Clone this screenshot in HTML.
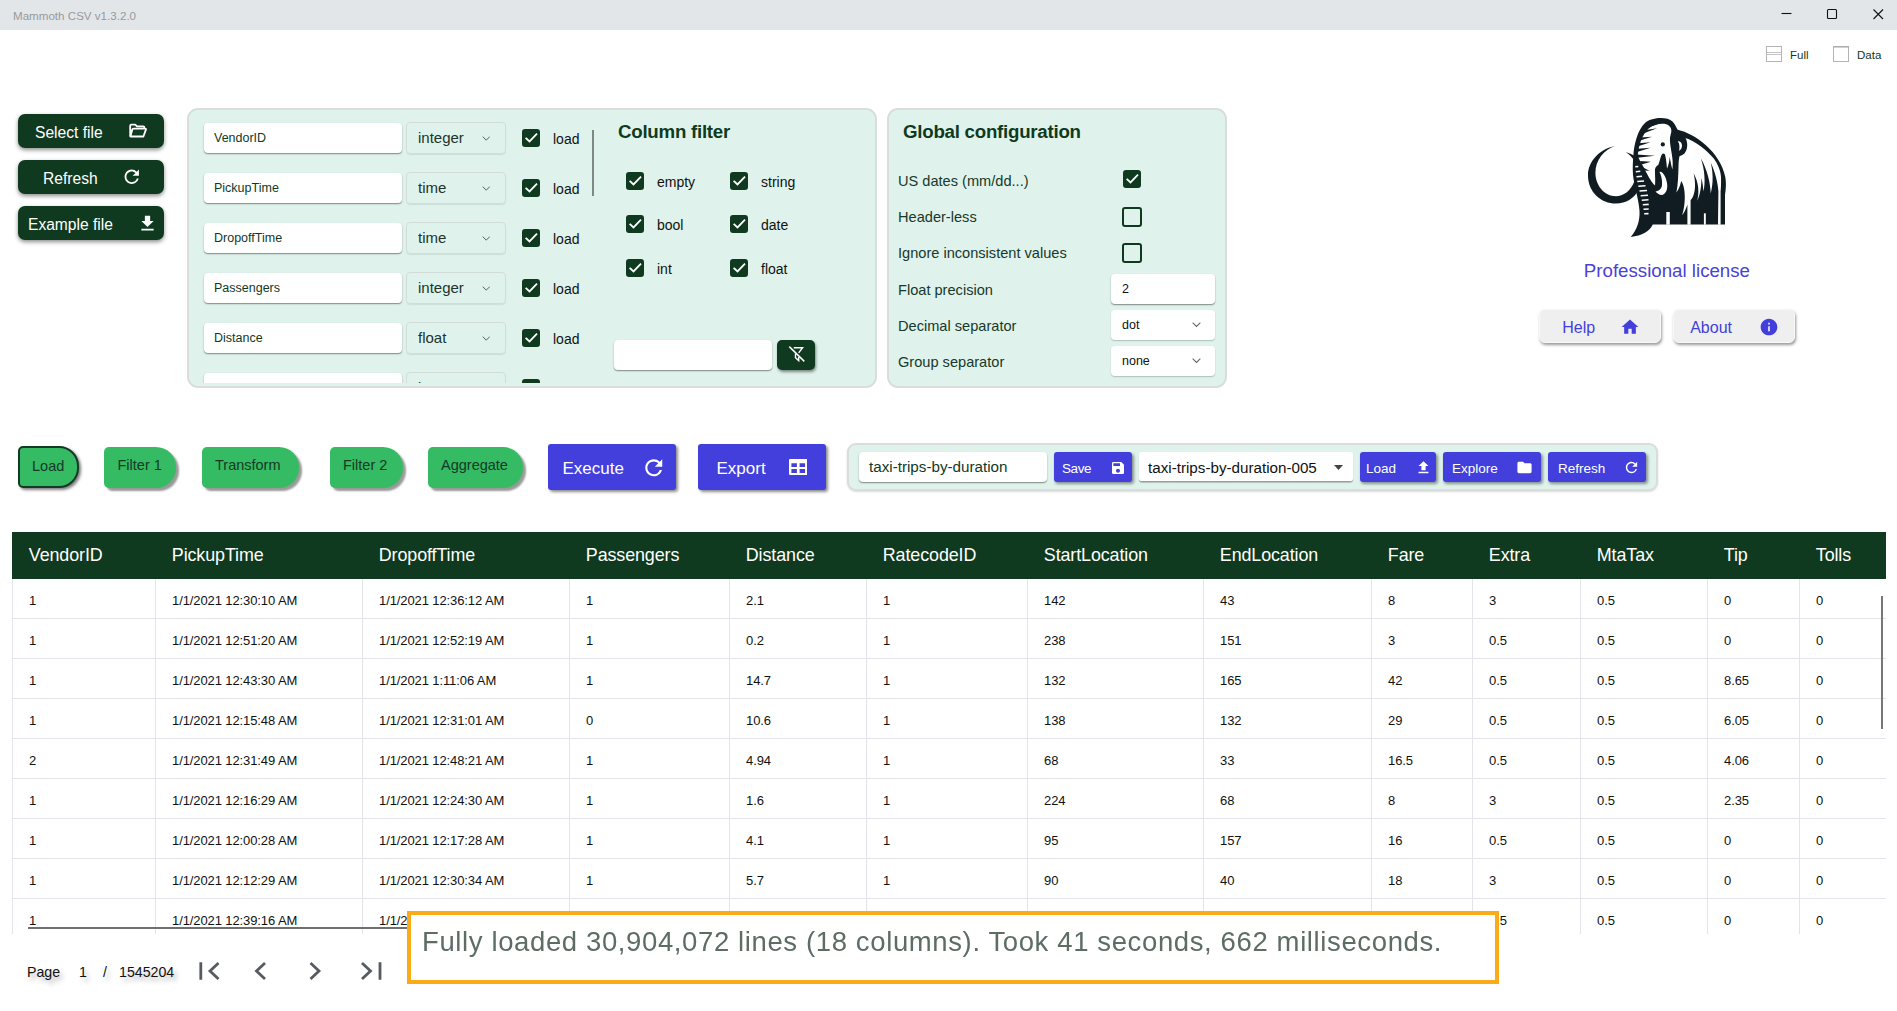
<!DOCTYPE html>
<html lang="en"><head><meta charset="utf-8"><title>Mammoth CSV v1.3.2.0</title>
<style>
*{box-sizing:border-box;margin:0;padding:0}
html,body{width:1897px;height:1011px;overflow:hidden;background:#fff}
body{font-family:"Liberation Sans",sans-serif;color:#103a1f;position:relative}
.abs{position:absolute}
.t{position:absolute;white-space:nowrap;line-height:1}
#titlebar{left:0;top:0;width:1897px;height:30px;background:#e3e6e9}
#titlebar .t{left:13px;top:10.300px;font-size:11.600px;color:#97999c}
.dbtn{position:absolute;left:18px;width:146px;height:34px;background:#0f3a20;border-radius:7px;box-shadow:0 2px 4px rgba(0,0,0,.45);color:#fff;font-size:15.600px}
.dbtn .t{top:11px}
.panel{position:absolute;background:#dff3ec;border:2px solid #d9dedc;border-radius:11px}
.inp{position:absolute;background:#fff;border-radius:4px;box-shadow:0 1px 1.5px rgba(0,0,0,.45);font-size:12.5px;color:#103a1f}
.sel{position:absolute;border:1px solid #d3dcd8;border-radius:4px;font-size:15px;color:#23332b;box-shadow:0 1px 1px rgba(0,0,0,.08)}
.cb{position:absolute;width:18px;height:18px;border-radius:3px;background:#0f3a20}
.cb svg{position:absolute;left:0;top:0}
.cbe{position:absolute;width:20px;height:20px;border-radius:3px;border:2px solid #0f3a20}
.lbl{font-size:14px;color:#111}
.h{font-size:18.700px;font-weight:bold;color:#0f3a20;letter-spacing:-0.250px}
.gl{font-size:14.600px;color:#17382a}
.step{position:absolute;top:446.500px;height:41px;background:#35bb63;border-radius:5px 20px 20px 5px;box-shadow:3px 3px 2px rgba(0,0,0,.4);font-size:14.5px;color:#143a26}
.step .t{top:11px}
.pbtn{position:absolute;background:#423fdd;color:#fff;border-radius:3px;box-shadow:2px 2px 3px rgba(0,0,0,.45)}
.sb{position:absolute;top:452px;height:30px;background:#423fdd;color:#fff;border-radius:3px;box-shadow:1.500px 2px 3px rgba(0,0,0,.4);font-size:13.5px}
.sb .t{top:10px}
.lbtn{position:absolute;top:309px;height:34px;background:#efeff0;border-radius:6px;border:1px solid #f8f8f8;box-shadow:1px 2px 3px rgba(0,0,0,.4);font-size:16px;color:#423fdd}
#thead{left:12px;top:531.500px;width:1874px;height:47.500px;background:#0f3a20}
#thead .t{top:15.700px;margin-left:.800px;font-size:17.900px;color:#fff;letter-spacing:-0.100px}
.row{position:absolute;left:0;width:1874px;height:40px;border-bottom:1px solid #e3e3ea}
.c{position:absolute;top:0;height:40px;border-left:1px solid #e3e3ea;font-size:13px;color:#111;line-height:44px;padding-left:16px;white-space:nowrap;letter-spacing:-0.100px}
.pg{font-size:14.200px;color:#111;text-shadow:3px 4px 5px rgba(0,0,0,.3)}
</style></head><body>
<div id="titlebar" class="abs"><span class="t">Mammoth CSV v1.3.2.0</span></div>
<svg class="abs" style="left:1770px;top:0" width="127" height="30" viewBox="0 0 127 30"><path d="M11.5 13.5 H21.5" stroke="#111" stroke-width="1.1" fill="none"/><rect x="57.5" y="9.5" width="9" height="9" rx="1" fill="none" stroke="#111" stroke-width="1.1"/><path d="M103.5 9.5 L113 19 M113 9.5 L103.5 19" stroke="#111" stroke-width="1.1" fill="none"/></svg>
<svg class="abs" style="left:1766px;top:46px" width="17" height="17" viewBox="0 0 17 17"><rect x="0.500" y="0.500" width="15" height="15" fill="#fff" stroke="#b4b4b4"/><path d="M0.500 6.500 H15.500 M0.500 8.500 H15.500" stroke="#c4c4c4"/></svg>
<span class="t" style="left:1790px;top:50.200px;font-size:11.500px;color:#103a1f">Full</span>
<svg class="abs" style="left:1833px;top:46px" width="17" height="17" viewBox="0 0 17 17"><rect x="0.500" y="0.500" width="15" height="15" fill="#fff" stroke="#b4b4b4"/><path d="M0.500 1 H15.500" stroke="#a5a5a5"/></svg>
<span class="t" style="left:1857px;top:50.200px;font-size:11.500px;color:#103a1f">Data</span>
<div class="dbtn" style="top:114px"><span class="t" style="left:17px">Select file</span><svg class="abs" style="left:110px;top:9px" width="20" height="16" viewBox="0 0 20 16"><path d="M2.2 13.5 V2.8 Q2.2 1.6 3.4 1.6 H7.2 L9 3.4 H15.2 Q16.4 3.4 16.4 4.6 V5.6 H5.6 Q4.6 5.6 4.3 6.6 L2.4 13.5 H15.4 L17.9 6.6 Q18.2 5.6 17.2 5.6" fill="none" stroke="#fff" stroke-width="1.800" stroke-linejoin="round"/></svg></div>
<div class="dbtn" style="top:160px"><span class="t" style="left:25px">Refresh</span><svg class="abs" style="left:102.500px;top:6px" width="21.500" height="21.500" viewBox="0 0 24 24"><path fill="#fff" d="M17.65 6.35A7.958 7.958 0 0 0 12 4c-4.42 0-7.99 3.58-7.99 8s3.57 8 7.99 8c3.73 0 6.84-2.55 7.73-6h-2.08A5.99 5.99 0 0 1 12 18c-3.31 0-6-2.69-6-6s2.690-6 6-6c1.660 0 3.140.69 4.220 1.780L13 11h7V4l-2.350 2.350z"/></svg></div>
<div class="dbtn" style="top:206px"><span class="t" style="left:10px">Example file</span><svg class="abs" style="left:119.300px;top:7px" width="21" height="21" viewBox="0 0 24 24"><path fill="#fff" d="M19 9h-4V3H9v6H5l7 7 7-7zM5 18v2h14v-2H5z"/></svg></div>
<div class="panel" style="left:187px;top:108px;width:690px;height:280px;overflow:hidden">
<div class="abs" style="left:0;top:0;width:400px;height:272.500px;overflow:hidden">
<div class="inp" style="left:15px;top:13px;width:198px;height:30px"><span class="t" style="left:10px;top:9px">VendorID</span></div>
<div class="sel" style="left:217px;top:12px;width:100px;height:32px"><span class="t" style="left:11px;top:7px">integer</span><svg class="abs" style="left:74.6px;top:12.5px" width="8.5" height="5" viewBox="0 0 10 6"><path d="M0.700 0.700 L5 5 L9.300 0.700" fill="none" stroke="#53635b" stroke-width="1.200"/></svg></div>
<div class="cb" style="left:333px;top:19px"><svg width="18" height="18" viewBox="0 0 18 18"><path d="M4.300 9.500 L7.500 12.400 L14.400 5.300" fill="none" stroke="#fff" stroke-width="1.800" stroke-linecap="square"/></svg></div>
<span class="t lbl" style="left:364px;top:22px">load</span>
<div class="inp" style="left:15px;top:63px;width:198px;height:30px"><span class="t" style="left:10px;top:9px">PickupTime</span></div>
<div class="sel" style="left:217px;top:62px;width:100px;height:32px"><span class="t" style="left:11px;top:7px">time</span><svg class="abs" style="left:74.6px;top:12.5px" width="8.5" height="5" viewBox="0 0 10 6"><path d="M0.700 0.700 L5 5 L9.300 0.700" fill="none" stroke="#53635b" stroke-width="1.200"/></svg></div>
<div class="cb" style="left:333px;top:69px"><svg width="18" height="18" viewBox="0 0 18 18"><path d="M4.300 9.500 L7.500 12.400 L14.400 5.300" fill="none" stroke="#fff" stroke-width="1.800" stroke-linecap="square"/></svg></div>
<span class="t lbl" style="left:364px;top:72px">load</span>
<div class="inp" style="left:15px;top:113px;width:198px;height:30px"><span class="t" style="left:10px;top:9px">DropoffTime</span></div>
<div class="sel" style="left:217px;top:112px;width:100px;height:32px"><span class="t" style="left:11px;top:7px">time</span><svg class="abs" style="left:74.6px;top:12.5px" width="8.5" height="5" viewBox="0 0 10 6"><path d="M0.700 0.700 L5 5 L9.300 0.700" fill="none" stroke="#53635b" stroke-width="1.200"/></svg></div>
<div class="cb" style="left:333px;top:119px"><svg width="18" height="18" viewBox="0 0 18 18"><path d="M4.300 9.500 L7.500 12.400 L14.400 5.300" fill="none" stroke="#fff" stroke-width="1.800" stroke-linecap="square"/></svg></div>
<span class="t lbl" style="left:364px;top:122px">load</span>
<div class="inp" style="left:15px;top:163px;width:198px;height:30px"><span class="t" style="left:10px;top:9px">Passengers</span></div>
<div class="sel" style="left:217px;top:162px;width:100px;height:32px"><span class="t" style="left:11px;top:7px">integer</span><svg class="abs" style="left:74.6px;top:12.5px" width="8.5" height="5" viewBox="0 0 10 6"><path d="M0.700 0.700 L5 5 L9.300 0.700" fill="none" stroke="#53635b" stroke-width="1.200"/></svg></div>
<div class="cb" style="left:333px;top:169px"><svg width="18" height="18" viewBox="0 0 18 18"><path d="M4.300 9.500 L7.500 12.400 L14.400 5.300" fill="none" stroke="#fff" stroke-width="1.800" stroke-linecap="square"/></svg></div>
<span class="t lbl" style="left:364px;top:172px">load</span>
<div class="inp" style="left:15px;top:213px;width:198px;height:30px"><span class="t" style="left:10px;top:9px">Distance</span></div>
<div class="sel" style="left:217px;top:212px;width:100px;height:32px"><span class="t" style="left:11px;top:7px">float</span><svg class="abs" style="left:74.6px;top:12.5px" width="8.5" height="5" viewBox="0 0 10 6"><path d="M0.700 0.700 L5 5 L9.300 0.700" fill="none" stroke="#53635b" stroke-width="1.200"/></svg></div>
<div class="cb" style="left:333px;top:219px"><svg width="18" height="18" viewBox="0 0 18 18"><path d="M4.300 9.500 L7.500 12.400 L14.400 5.300" fill="none" stroke="#fff" stroke-width="1.800" stroke-linecap="square"/></svg></div>
<span class="t lbl" style="left:364px;top:222px">load</span>
<div class="inp" style="left:15px;top:263px;width:198px;height:30px"><span class="t" style="left:10px;top:9px"></span></div>
<div class="sel" style="left:217px;top:262px;width:100px;height:32px"><span class="t" style="left:11px;top:7px">i</span><svg class="abs" style="left:74.6px;top:12.5px" width="8.5" height="5" viewBox="0 0 10 6"><path d="M0.700 0.700 L5 5 L9.300 0.700" fill="none" stroke="#53635b" stroke-width="1.200"/></svg></div>
<div class="cb" style="left:333px;top:269px"><svg width="18" height="18" viewBox="0 0 18 18"><path d="M4.300 9.500 L7.500 12.400 L14.400 5.300" fill="none" stroke="#fff" stroke-width="1.800" stroke-linecap="square"/></svg></div>
</div>
<div class="abs" style="left:403px;top:20px;width:2px;height:66px;background:#7d8985"></div>
<span class="t h" style="left:429px;top:13.299999999999997px">Column filter</span>
<div class="cb" style="left:437px;top:62px"><svg width="18" height="18" viewBox="0 0 18 18"><path d="M4.300 9.500 L7.500 12.400 L14.400 5.300" fill="none" stroke="#fff" stroke-width="1.800" stroke-linecap="square"/></svg></div>
<span class="t lbl" style="left:468px;top:65px">empty</span>
<div class="cb" style="left:541px;top:62px"><svg width="18" height="18" viewBox="0 0 18 18"><path d="M4.300 9.500 L7.500 12.400 L14.400 5.300" fill="none" stroke="#fff" stroke-width="1.800" stroke-linecap="square"/></svg></div>
<span class="t lbl" style="left:572px;top:65px">string</span>
<div class="cb" style="left:437px;top:105px"><svg width="18" height="18" viewBox="0 0 18 18"><path d="M4.300 9.500 L7.500 12.400 L14.400 5.300" fill="none" stroke="#fff" stroke-width="1.800" stroke-linecap="square"/></svg></div>
<span class="t lbl" style="left:468px;top:108px">bool</span>
<div class="cb" style="left:541px;top:105px"><svg width="18" height="18" viewBox="0 0 18 18"><path d="M4.300 9.500 L7.500 12.400 L14.400 5.300" fill="none" stroke="#fff" stroke-width="1.800" stroke-linecap="square"/></svg></div>
<span class="t lbl" style="left:572px;top:108px">date</span>
<div class="cb" style="left:437px;top:149px"><svg width="18" height="18" viewBox="0 0 18 18"><path d="M4.300 9.500 L7.500 12.400 L14.400 5.300" fill="none" stroke="#fff" stroke-width="1.800" stroke-linecap="square"/></svg></div>
<span class="t lbl" style="left:468px;top:152px">int</span>
<div class="cb" style="left:541px;top:149px"><svg width="18" height="18" viewBox="0 0 18 18"><path d="M4.300 9.500 L7.500 12.400 L14.400 5.300" fill="none" stroke="#fff" stroke-width="1.800" stroke-linecap="square"/></svg></div>
<span class="t lbl" style="left:572px;top:152px">float</span>
<div class="inp" style="left:425px;top:230px;width:158px;height:30px"></div>
<div class="abs" style="left:588px;top:230px;width:38px;height:30px;background:#0f3a20;border-radius:5px;box-shadow:1px 2px 3px rgba(0,0,0,.45)"><svg class="abs" style="left:0;top:0" width="38" height="30" viewBox="0 0 38 30"><g fill="none" stroke="#fff" stroke-width="1.400"><path d="M16.800 7.700 H25.600 L21.700 12.900"/><path d="M18.500 13.600 V17.800 L21.700 20.600 V17"/><path d="M12.300 6.600 L27.300 21.400" stroke-width="1.500"/></g></svg></div>
</div>
<div class="panel" style="left:887px;top:108px;width:340px;height:280px">
<span class="t h" style="left:14px;top:13.299999999999997px">Global configuration</span>
<span class="t gl" style="left:9px;top:63.5px">US dates (mm/dd...)</span>
<span class="t gl" style="left:9px;top:99.5px">Header-less</span>
<span class="t gl" style="left:9px;top:135.5px">Ignore inconsistent values</span>
<span class="t gl" style="left:9px;top:172.5px">Float precision</span>
<span class="t gl" style="left:9px;top:208.5px">Decimal separator</span>
<span class="t gl" style="left:9px;top:244.5px">Group separator</span>
<div class="cb" style="left:234px;top:60px"><svg width="18" height="18" viewBox="0 0 18 18"><path d="M4.300 9.500 L7.500 12.400 L14.400 5.300" fill="none" stroke="#fff" stroke-width="1.800" stroke-linecap="square"/></svg></div>
<div class="cbe" style="left:233px;top:96.5px"></div>
<div class="cbe" style="left:233px;top:132.5px"></div>
<div class="inp" style="left:222px;top:164px;width:104px;height:30px"><span class="t" style="left:11px;top:9px;color:#111">2</span></div>
<div class="inp" style="left:222px;top:200px;width:104px;height:30px;box-shadow:0 1px 1.500px rgba(0,0,0,.22)"><span class="t" style="left:11px;top:9px;color:#111">dot</span><svg class="abs" style="left:81px;top:12.3px" width="9" height="5.4" viewBox="0 0 10 6"><path d="M0.700 0.700 L5 5 L9.300 0.700" fill="none" stroke="#666" stroke-width="1.200"/></svg></div>
<div class="inp" style="left:222px;top:236px;width:104px;height:30px;box-shadow:0 1px 1.500px rgba(0,0,0,.22)"><span class="t" style="left:11px;top:9px;color:#111">none</span><svg class="abs" style="left:81px;top:12.3px" width="9" height="5.4" viewBox="0 0 10 6"><path d="M0.700 0.700 L5 5 L9.300 0.700" fill="none" stroke="#666" stroke-width="1.200"/></svg></div>
</div>
<svg class="abs" style="left:1570px;top:105px" width="180" height="145" viewBox="0 0 180 145">
<g fill="#101c21">
<path d="M63.300 52 C63.800 40 67.500 24.500 75.500 17.500 C82 12.300 97 11.300 102.500 16.500 C105 19 106 22 107.700 24.700 C125 28.500 150.500 47 155.300 72 C156.600 80 155.500 86 155 90 L155 119.500 L82.800 119.500 C80 126 72 131 60.700 131.900 C67 125 70 116 69.500 106 C69 95 64 80 63 70 C62.500 62 62.900 56 63.300 52Z"/>
<path d="M45 41 C30 44 18 56 18 70.400 C18 87 31 98.500 46 98.500 C56 98.500 64 93 68 86 L64.500 76 C61 86 53 91.300 46 91.300 C34 91.300 25.400 80 25.400 67.800 C25.400 55 34 45 45 41Z"/>
<path d="M55.800 47.300 C61 48.500 66 51 70 56 L65 57 C62.500 52.500 59.500 49.500 55.800 47.300Z"/>
</g>
<g fill="#fff">
<!-- face -->
<path d="M67.800 50.500 C68.500 41 72 29 79 23.200 C84.500 18.800 95 17.300 99 20.800 C101.500 23 102 26 100.700 29.500 C99.500 33 99.800 37 100.800 43 C101.800 50 103.500 56 102.400 64.400 C101 60 100.500 56 99.700 51.700 C99.500 56 98.500 60 97 63.800 C96.500 58 96 53 95 49.500 C94 47.800 92.200 48.200 91.300 50.500 C90 54 89.500 57 88.400 59.700 C86 61 84.500 63 85 67 C85 72 85.500 77 85 80.500 C81 77 76.500 68 73.500 62 C71 57.500 68.500 53.500 67.800 50.500Z"/>
<!-- body fur -->
<path d="M115.500 33 C126 36.800 136 44.500 143.800 53.500 C147.800 59 150.800 66 151 72 C151.200 78 151 83 150.600 86.500 L150.600 119.700 L148 119.700 L148.400 86.500 C148 78 145 66.700 140.700 57.400 C142.800 66 143.800 77 140.700 88.500 C140.500 80 138 66 130.800 53.200 C134.700 64 135.700 78 133.400 86.500 C133 81 132.500 77 131.400 73 C131.500 82 130 90 127.200 95.800 C129.300 88 129 78 123.600 68.300 C126 78 125.500 88 122 93.500 L120.600 95 L120.600 119.700 L117.400 119.700 L117.400 99.500 C116 104 114 108 112.100 110.300 C114.500 103 115.500 93 114.200 84.400 C113.500 80 112.500 78 111.100 76.100 C110.500 80 109 84 106.400 87.500 C108 80 108.300 70 108.500 61.500 C108.600 56 109 53 109.600 51 C112 50.500 114.600 49 115.400 47 C117.800 43.500 117.800 37 115.500 33Z"/>
<!-- ear inner crescent -->
<path d="M107.800 36.400 C110 36 112 38 112 40.500 C112 43 110.800 44.800 109 45.800 C109.600 43.500 109.600 40 108.800 38 C108.500 37.300 108.200 36.800 107.800 36.400Z"/>
<!-- tusk2 curl -->
<path d="M89.500 67 C92 66 95.500 70 97 78 C98 84 96 89 92 90 C89 90 87 88 85.500 86.500 C89 86 91.500 84 92 80 C92.500 75 91 70 89.500 67Z"/>
<!-- leg gaps -->
<path d="M96.300 107 L99.800 107 L99.800 119.700 L96.300 119.700Z"/>
<path d="M133.900 108.300 L135.800 108.300 L135.800 119.700 L133.900 119.700Z"/>
</g>
<g stroke="#fff" stroke-width="1.600" fill="none">
<path d="M65.300 61.700 L68.300 61.500"/><path d="M65.800 66.700 L70.300 66.300"/><path d="M66.500 71.700 L72 71.300"/><path d="M67.300 76.500 L74 76"/><path d="M68.300 81.300 L75.500 80.800"/><path d="M69.500 86 L77 85.500"/><path d="M70.700 90.700 L78 90.200"/><path d="M71.800 95.300 L78.500 94.800"/><path d="M72.800 99.800 L78.700 99.400"/><path d="M73.500 104.300 L78.700 104"/><path d="M74.200 108.800 L78.500 108.600"/>
</g>
<g fill="#101c21">
<!-- hatch wedges -->
<path d="M75 20.500 L88.500 18.800 L75.500 23.500Z"/>
<path d="M72.500 25.500 L87 23.200 L72 29Z"/>
<path d="M70.500 32.500 L82 31.800 L70 35.500Z"/>
<path d="M68.500 38.200 L80.500 37.300 L68 41.300Z"/>
<path d="M67.500 43.800 L80.500 42.800 L67 47Z"/>
<path d="M66.500 49.500 L85 50.800 L67.500 52.800Z"/>
<path d="M70 56 L81 56.800 L71.500 59.500Z"/>
<path d="M73 62.500 L79.500 65.800 L74.500 65.500Z"/>
<circle cx="92.800" cy="39.400" r="2.100"/>
</g>
</svg>

<span class="t" style="left:1583.800px;top:262.200px;font-size:18.700px;color:#4a41d6">Professional license</span>
<div class="lbtn" style="left:1539px;width:122px"><span class="t" style="left:22.200px;top:9.700px">Help</span><svg class="abs" style="left:79.800px;top:6.800px" width="20" height="20" viewBox="0 0 24 24"><path fill="#423fdd" d="M10 20v-6h4v6h5v-8h3L12 3 2 12h3v8z"/></svg></div>
<div class="lbtn" style="left:1672.500px;width:122.500px"><span class="t" style="left:16.700px;top:9.700px">About</span><svg class="abs" style="left:85.200px;top:6.800px" width="20" height="20" viewBox="0 0 24 24"><path fill="#423fdd" d="M12 2C6.48 2 2 6.48 2 12s4.480 10 10 10 10-4.480 10-10S17.520 2 12 2zm1 15h-2v-6h2v6zm0-8h-2V7h2v2z"/></svg></div>
<div class="step" style="left:17.500px;width:61.500px;top:445.500px;height:42.500px;border:2px solid #143a26;box-shadow:2px 2px 3px rgba(0,0,0,.5)"><span class="t" style="left:12.500px;top:11px">Load</span></div>
<div class="step" style="left:104px;width:72px"><span class="t" style="left:13.5px">Filter 1</span></div>
<div class="step" style="left:201.5px;width:97.5px"><span class="t" style="left:13.5px">Transform</span></div>
<div class="step" style="left:329.5px;width:73px"><span class="t" style="left:13.5px">Filter 2</span></div>
<div class="step" style="left:428px;width:95px"><span class="t" style="left:13px">Aggregate</span></div>
<div class="pbtn" style="left:548px;top:444px;width:128px;height:46px;font-size:17px"><span class="t" style="left:14.500px;top:15.500px">Execute</span><svg class="abs" style="left:93.400px;top:10.800px" width="25.500" height="25.500" viewBox="0 0 24 24"><path fill="#fff" d="M17.65 6.35A7.958 7.958 0 0 0 12 4c-4.42 0-7.99 3.58-7.99 8s3.57 8 7.99 8c3.73 0 6.84-2.55 7.73-6h-2.08A5.99 5.99 0 0 1 12 18c-3.31 0-6-2.69-6-6s2.690-6 6-6c1.660 0 3.140.69 4.220 1.780L13 11h7V4l-2.350 2.350z"/></svg></div>
<div class="pbtn" style="left:698px;top:444px;width:128px;height:46px;font-size:17px"><span class="t" style="left:18.500px;top:15.500px">Export</span><svg class="abs" style="left:90.800px;top:15px" width="18.500" height="16" viewBox="0 0 18.500 16"><path fill="#fff" fill-rule="evenodd" d="M1 0H17.500Q18.500 0 18.500 1V15Q18.500 16 17.500 16H1Q0 16 0 15V1Q0 0 1 0ZM2.400 4.200V8.100H7.900V4.200ZM10.600 4.200V8.100H16.100V4.200ZM2.400 10.100V14H7.900V10.100ZM10.600 10.100V14H16.100V10.100Z"/></svg></div>
<div class="panel" style="left:847px;top:443px;width:811px;height:48px;border-radius:9px;box-shadow:0 1px 2px rgba(0,0,0,.15)"></div>
<div class="inp" style="left:859px;top:452px;width:188px;height:30px;font-size:15.200px"><span class="t" style="left:10px;top:6.500px">taxi-trips-by-duration</span></div>
<div class="sb" style="left:1054px;width:78px"><span class="t" style="left:8px;letter-spacing:-0.400px">Save</span><svg class="abs" style="left:56px;top:8px" width="16" height="16" viewBox="0 0 24 24"><path fill="#fff" d="M17 3H5a2 2 0 0 0-2 2v14a2 2 0 0 0 2 2h14c1.100 0 2-.9 2-2V7l-4-4zm-5 16c-1.660 0-3-1.340-3-3s1.340-3 3-3 3 1.340 3 3-1.340 3-3 3zm3-10H5V5h10v4z"/></svg></div>
<div class="abs" style="left:1139px;top:452px;width:214px;height:30px;background:#fff;border-radius:3px;border-bottom:1px solid #9a9a9a;box-shadow:0 1px 1px rgba(0,0,0,.2)"><span class="t" style="left:9px;top:7.500px;font-size:15.200px;color:#111">taxi-trips-by-duration-005</span><svg class="abs" style="left:194.500px;top:12.500px" width="9" height="5.500" viewBox="0 0 10 6"><path d="M0 0 H10 L5 5.5Z" fill="#444"/></svg></div>
<div class="sb" style="left:1360px;width:76px"><span class="t" style="left:6px">Load</span><svg class="abs" style="left:54.500px;top:7px" width="17" height="17" viewBox="0 0 24 24"><path fill="#fff" d="M9 16h6v-6h4l-7-7-7 7h4v6zm-4 2h14v2H5v-2z"/></svg></div>
<div class="sb" style="left:1443px;width:98px"><span class="t" style="left:9px">Explore</span><svg class="abs" style="left:73px;top:6.500px" width="17" height="17" viewBox="0 0 24 24"><path fill="#fff" d="M10 4H4c-1.100 0-1.990.9-1.990 2L2 18c0 1.100.9 2 2 2h16c1.100 0 2-.9 2-2V8c0-1.100-.9-2-2-2h-8l-2-2z"/></svg></div>
<div class="sb" style="left:1548px;width:98px"><span class="t" style="left:10px">Refresh</span><svg class="abs" style="left:74.500px;top:6.500px" width="17" height="17" viewBox="0 0 24 24"><path fill="#fff" d="M17.65 6.35A7.958 7.958 0 0 0 12 4c-4.42 0-7.99 3.58-7.99 8s3.57 8 7.99 8c3.73 0 6.84-2.55 7.73-6h-2.08A5.99 5.99 0 0 1 12 18c-3.31 0-6-2.69-6-6s2.690-6 6-6c1.660 0 3.140.69 4.220 1.780L13 11h7V4l-2.350 2.350z"/></svg></div>
<div id="thead" class="abs">
<span class="t" style="left:16px">VendorID</span>
<span class="t" style="left:159px">PickupTime</span>
<span class="t" style="left:366px">DropoffTime</span>
<span class="t" style="left:573px">Passengers</span>
<span class="t" style="left:733px">Distance</span>
<span class="t" style="left:870px">RatecodeID</span>
<span class="t" style="left:1031px">StartLocation</span>
<span class="t" style="left:1207px">EndLocation</span>
<span class="t" style="left:1375px">Fare</span>
<span class="t" style="left:1476px">Extra</span>
<span class="t" style="left:1584px">MtaTax</span>
<span class="t" style="left:1711px">Tip</span>
<span class="t" style="left:1803px">Tolls</span>
</div>
<div class="abs" style="left:12px;top:579px;width:1874px;height:355px;overflow:hidden">
<div class="row" style="left:0;top:0px">
<div class="c" style="left:0px;width:143px">1</div>
<div class="c" style="left:143px;width:207px">1/1/2021 12:30:10 AM</div>
<div class="c" style="left:350px;width:207px">1/1/2021 12:36:12 AM</div>
<div class="c" style="left:557px;width:160px">1</div>
<div class="c" style="left:717px;width:137px">2.1</div>
<div class="c" style="left:854px;width:161px">1</div>
<div class="c" style="left:1015px;width:176px">142</div>
<div class="c" style="left:1191px;width:168px">43</div>
<div class="c" style="left:1359px;width:101px">8</div>
<div class="c" style="left:1460px;width:108px">3</div>
<div class="c" style="left:1568px;width:127px">0.5</div>
<div class="c" style="left:1695px;width:92px">0</div>
<div class="c" style="left:1787px;width:87px">0</div>
</div>
<div class="row" style="left:0;top:40px">
<div class="c" style="left:0px;width:143px">1</div>
<div class="c" style="left:143px;width:207px">1/1/2021 12:51:20 AM</div>
<div class="c" style="left:350px;width:207px">1/1/2021 12:52:19 AM</div>
<div class="c" style="left:557px;width:160px">1</div>
<div class="c" style="left:717px;width:137px">0.2</div>
<div class="c" style="left:854px;width:161px">1</div>
<div class="c" style="left:1015px;width:176px">238</div>
<div class="c" style="left:1191px;width:168px">151</div>
<div class="c" style="left:1359px;width:101px">3</div>
<div class="c" style="left:1460px;width:108px">0.5</div>
<div class="c" style="left:1568px;width:127px">0.5</div>
<div class="c" style="left:1695px;width:92px">0</div>
<div class="c" style="left:1787px;width:87px">0</div>
</div>
<div class="row" style="left:0;top:80px">
<div class="c" style="left:0px;width:143px">1</div>
<div class="c" style="left:143px;width:207px">1/1/2021 12:43:30 AM</div>
<div class="c" style="left:350px;width:207px">1/1/2021 1:11:06 AM</div>
<div class="c" style="left:557px;width:160px">1</div>
<div class="c" style="left:717px;width:137px">14.7</div>
<div class="c" style="left:854px;width:161px">1</div>
<div class="c" style="left:1015px;width:176px">132</div>
<div class="c" style="left:1191px;width:168px">165</div>
<div class="c" style="left:1359px;width:101px">42</div>
<div class="c" style="left:1460px;width:108px">0.5</div>
<div class="c" style="left:1568px;width:127px">0.5</div>
<div class="c" style="left:1695px;width:92px">8.65</div>
<div class="c" style="left:1787px;width:87px">0</div>
</div>
<div class="row" style="left:0;top:120px">
<div class="c" style="left:0px;width:143px">1</div>
<div class="c" style="left:143px;width:207px">1/1/2021 12:15:48 AM</div>
<div class="c" style="left:350px;width:207px">1/1/2021 12:31:01 AM</div>
<div class="c" style="left:557px;width:160px">0</div>
<div class="c" style="left:717px;width:137px">10.6</div>
<div class="c" style="left:854px;width:161px">1</div>
<div class="c" style="left:1015px;width:176px">138</div>
<div class="c" style="left:1191px;width:168px">132</div>
<div class="c" style="left:1359px;width:101px">29</div>
<div class="c" style="left:1460px;width:108px">0.5</div>
<div class="c" style="left:1568px;width:127px">0.5</div>
<div class="c" style="left:1695px;width:92px">6.05</div>
<div class="c" style="left:1787px;width:87px">0</div>
</div>
<div class="row" style="left:0;top:160px">
<div class="c" style="left:0px;width:143px">2</div>
<div class="c" style="left:143px;width:207px">1/1/2021 12:31:49 AM</div>
<div class="c" style="left:350px;width:207px">1/1/2021 12:48:21 AM</div>
<div class="c" style="left:557px;width:160px">1</div>
<div class="c" style="left:717px;width:137px">4.94</div>
<div class="c" style="left:854px;width:161px">1</div>
<div class="c" style="left:1015px;width:176px">68</div>
<div class="c" style="left:1191px;width:168px">33</div>
<div class="c" style="left:1359px;width:101px">16.5</div>
<div class="c" style="left:1460px;width:108px">0.5</div>
<div class="c" style="left:1568px;width:127px">0.5</div>
<div class="c" style="left:1695px;width:92px">4.06</div>
<div class="c" style="left:1787px;width:87px">0</div>
</div>
<div class="row" style="left:0;top:200px">
<div class="c" style="left:0px;width:143px">1</div>
<div class="c" style="left:143px;width:207px">1/1/2021 12:16:29 AM</div>
<div class="c" style="left:350px;width:207px">1/1/2021 12:24:30 AM</div>
<div class="c" style="left:557px;width:160px">1</div>
<div class="c" style="left:717px;width:137px">1.6</div>
<div class="c" style="left:854px;width:161px">1</div>
<div class="c" style="left:1015px;width:176px">224</div>
<div class="c" style="left:1191px;width:168px">68</div>
<div class="c" style="left:1359px;width:101px">8</div>
<div class="c" style="left:1460px;width:108px">3</div>
<div class="c" style="left:1568px;width:127px">0.5</div>
<div class="c" style="left:1695px;width:92px">2.35</div>
<div class="c" style="left:1787px;width:87px">0</div>
</div>
<div class="row" style="left:0;top:240px">
<div class="c" style="left:0px;width:143px">1</div>
<div class="c" style="left:143px;width:207px">1/1/2021 12:00:28 AM</div>
<div class="c" style="left:350px;width:207px">1/1/2021 12:17:28 AM</div>
<div class="c" style="left:557px;width:160px">1</div>
<div class="c" style="left:717px;width:137px">4.1</div>
<div class="c" style="left:854px;width:161px">1</div>
<div class="c" style="left:1015px;width:176px">95</div>
<div class="c" style="left:1191px;width:168px">157</div>
<div class="c" style="left:1359px;width:101px">16</div>
<div class="c" style="left:1460px;width:108px">0.5</div>
<div class="c" style="left:1568px;width:127px">0.5</div>
<div class="c" style="left:1695px;width:92px">0</div>
<div class="c" style="left:1787px;width:87px">0</div>
</div>
<div class="row" style="left:0;top:280px">
<div class="c" style="left:0px;width:143px">1</div>
<div class="c" style="left:143px;width:207px">1/1/2021 12:12:29 AM</div>
<div class="c" style="left:350px;width:207px">1/1/2021 12:30:34 AM</div>
<div class="c" style="left:557px;width:160px">1</div>
<div class="c" style="left:717px;width:137px">5.7</div>
<div class="c" style="left:854px;width:161px">1</div>
<div class="c" style="left:1015px;width:176px">90</div>
<div class="c" style="left:1191px;width:168px">40</div>
<div class="c" style="left:1359px;width:101px">18</div>
<div class="c" style="left:1460px;width:108px">3</div>
<div class="c" style="left:1568px;width:127px">0.5</div>
<div class="c" style="left:1695px;width:92px">0</div>
<div class="c" style="left:1787px;width:87px">0</div>
</div>
<div class="row" style="left:0;top:320px">
<div class="c" style="left:0px;width:143px">1</div>
<div class="c" style="left:143px;width:207px">1/1/2021 12:39:16 AM</div>
<div class="c" style="left:350px;width:207px">1/1/2021 12:57:43 AM</div>
<div class="c" style="left:557px;width:160px">1</div>
<div class="c" style="left:717px;width:137px">9.1</div>
<div class="c" style="left:854px;width:161px">1</div>
<div class="c" style="left:1015px;width:176px">97</div>
<div class="c" style="left:1191px;width:168px">129</div>
<div class="c" style="left:1359px;width:101px">27.5</div>
<div class="c" style="left:1460px;width:108px">0.5</div>
<div class="c" style="left:1568px;width:127px">0.5</div>
<div class="c" style="left:1695px;width:92px">0</div>
<div class="c" style="left:1787px;width:87px">0</div>
</div>
</div>
<div class="abs" style="left:1881px;top:596px;width:2px;height:133px;background:#787878"></div>
<div class="abs" style="left:28px;top:927px;width:380px;height:2px;background:#6f6f6f"></div>
<div class="abs" style="left:0;top:934px;width:1897px;height:77px;background:#fff"></div>
<span class="t pg" style="left:27px;top:965px">Page</span>
<span class="t pg" style="left:79px;top:965px">1</span>
<span class="t pg" style="left:103px;top:965px">/</span>
<span class="t pg" style="left:119px;top:965px">1545204</span>
<svg class="abs" style="left:196px;top:960px" width="190" height="22" viewBox="0 0 190 22"><g fill="none" stroke="#565b61" stroke-width="2.800"><path d="M4.800 2.200 V19.800 M22.500 3 L14 11 L22.500 19"/><path d="M69 3 L60.500 11 L69 19"/><path d="M114.500 3 L123 11 L114.500 19"/><path d="M166 3 L174.500 11 L166 19 M184 2.200 V19.800"/></g></svg>
<div class="abs" style="left:407px;top:911px;width:1092px;height:73px;background:#fff;border:4px solid #fcab18"></div>
<span class="t" style="left:422px;top:928px;font-size:27.500px;color:#5d6d64;letter-spacing:0.620px;filter:blur(.600px)">Fully loaded 30,904,072 lines (18 columns). Took 41 seconds, 662 milliseconds.</span>
</body></html>
